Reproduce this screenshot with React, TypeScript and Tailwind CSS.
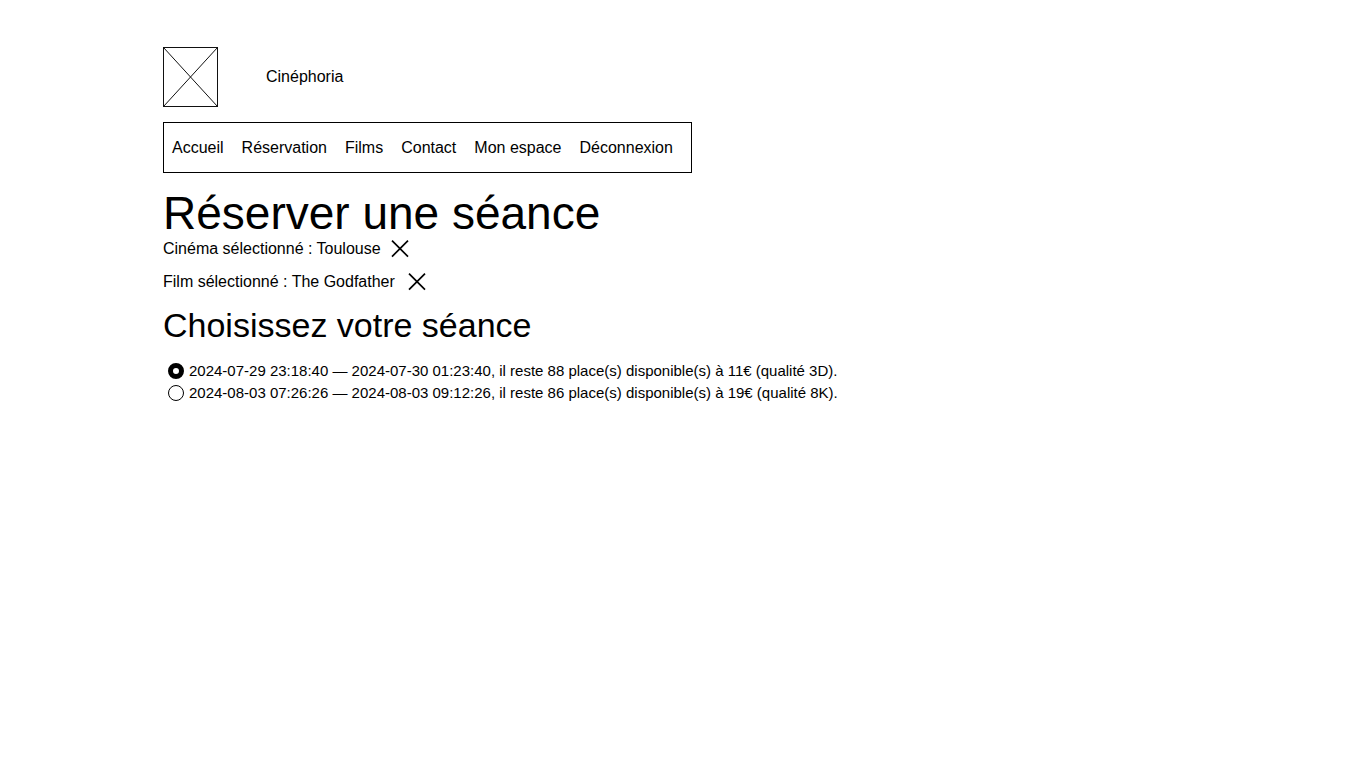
import { useState } from "react";

const links = ["Accueil", "Réservation", "Films", "Contact", "Mon espace", "Déconnexion"];

const sessions = [
  {
    id: "s1",
    label:
      "2024-07-29 23:18:40 — 2024-07-30 01:23:40, il reste 88 place(s) disponible(s) à 11€ (qualité 3D).",
  },
  {
    id: "s2",
    label:
      "2024-08-03 07:26:26 — 2024-08-03 09:12:26, il reste 86 place(s) disponible(s) à 19€ (qualité 8K).",
  },
];

function Cross() {
  return (
    <svg viewBox="0 0 18 18" className="size-[18px]" stroke="#000" strokeWidth="1.7" fill="none" aria-hidden="true">
      <path d="M1 0.6 L17 16.6 M17 0.6 L1 16.6" />
    </svg>
  );
}

function Logo() {
  return (
    <svg viewBox="0 0 55 60" className="h-[60px] w-[55px]" stroke="#111" fill="none" aria-hidden="true">
      <rect x="0.5" y="0.5" width="54" height="59" />
      <path d="M0.5 0.5 L54.5 59.5 M54.5 0.5 L0.5 59.5" />
    </svg>
  );
}

export default function App() {
  const [session, setSession] = useState("s1");

  return (
    <div className="px-[163px] pt-[47px] font-['Liberation_Sans',Arial,sans-serif] text-base leading-6 text-black">
      <header>
        <div className="flex items-center gap-12">
          <Logo />
          <span>Cinéphoria</span>
        </div>
        <nav className="mt-[15px] flex w-fit gap-[18px] border border-black py-3 pr-[18px] pl-2 leading-[25px]">
          {links.map((link) => (
            <a key={link} href="#">
              {link}
            </a>
          ))}
        </nav>
      </header>

      <main>
        <h1 className="mt-4 text-[46px] leading-12">Réserver une séance</h1>
        <div className="flex items-center gap-[10px]">
          <p>Cinéma sélectionné : Toulouse</p>
          <button type="button" aria-label="Retirer le cinéma">
            <Cross />
          </button>
        </div>
        <div className="mt-[9px] flex items-center gap-[13px]">
          <p>Film sélectionné : The Godfather</p>
          <button type="button" aria-label="Retirer le film">
            <Cross />
          </button>
        </div>
        <h2 className="mt-[11px] text-[34px] leading-10">Choisissez votre séance</h2>
        <div className="mt-[15px] pl-[5px] text-[15px] leading-[22px]">
          {sessions.map(({ id, label }) => (
            <div key={id} className="flex items-center gap-[5px]">
              <input
                type="radio"
                id={id}
                name="session"
                checked={session === id}
                onChange={() => setSession(id)}
                className="size-4 shrink-0 appearance-none rounded-full border border-black bg-white checked:border-5"
              />
              <label htmlFor={id}>{label}</label>
            </div>
          ))}
        </div>
      </main>
    </div>
  );
}
